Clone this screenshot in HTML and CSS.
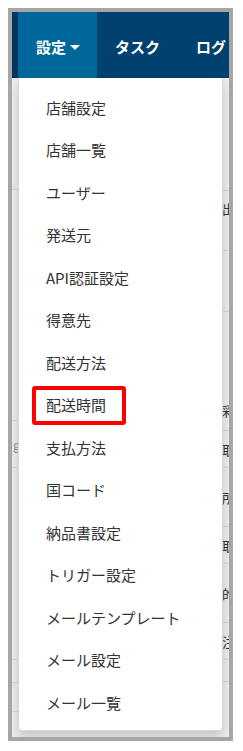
FILE: index.html
```html
<!DOCTYPE html>
<html lang="ja">
<head>
    <meta charset="UTF-8">
    <meta name="viewport" content="width=device-width, initial-scale=1.0">
    <title>設定メニュー</title>
    <link rel="stylesheet" href="styles.css">
</head>
<body>
    <div class="frame">
        <nav class="navbar">
            <div class="brand"></div>
            <ul class="nav">
                <li class="nav-item active">
                    <span class="nav-link">設定<span class="caret"></span></span>
                    <ul class="dropdown">
                        <li>店舗設定</li>
                        <li>店舗一覧</li>
                        <li>ユーザー</li>
                        <li>発送元</li>
                        <li>API認証設定</li>
                        <li>得意先</li>
                        <li>配送方法</li>
                        <li class="marked">配送時間<span class="mark"></span></li>
                        <li>支払方法</li>
                        <li>国コード</li>
                        <li>納品書設定</li>
                        <li>トリガー設定</li>
                        <li>メールテンプレート</li>
                        <li>メール設定</li>
                        <li>メール一覧</li>
                    </ul>
                </li>
                <li class="nav-item"><span class="nav-link">タスク</span></li>
                <li class="nav-item"><span class="nav-link">ログ<span class="caret"></span></span></li>
            </ul>
        </nav>

        <!-- page content hidden behind the open menu -->
        <div class="page">
            <div class="side">
                <div class="side-row r1"></div>
                <div class="side-row r2"></div>
                <div class="side-row r3">gmail</div>
                <div class="side-row r4"></div>
                <div class="side-row r5"></div>
                <div class="side-row r6"></div>
            </div>
            <div class="main">
                <div class="row h1"><span class="spacer"></span></div>
                <div class="row h2"><span class="spacer"></span><span class="cell">出荷</span></div>
                <div class="row h3"><span class="spacer"></span></div>
                <div class="row h4 end"><span class="spacer"></span><span class="cell">彩色</span></div>
                <div class="row h5"><span class="spacer"></span><span class="cell">取引</span></div>
                <div class="row h6"><span class="spacer"></span><span class="cell">所属</span></div>
                <div class="row h5"><span class="spacer"></span><span class="cell">取引</span></div>
                <div class="row h6"><span class="spacer"></span><span class="cell">的確</span></div>
                <div class="row h5"><span class="spacer"></span><span class="cell">注文</span></div>
                <div class="row h7"><span class="spacer"></span></div>
            </div>
        </div>
    </div>
</body>
</html>
```

FILE: styles.css
```css
body {
    margin: 8px;
    background-color: #fff;
    font-family: "Noto Sans CJK JP", "Noto Sans", sans-serif;
    color: #333;
}

.frame {
    width: 225px;
    height: 733px;
    box-sizing: border-box;
    border: 4px solid #a8a5a5;
    background-color: #eee;
    overflow: hidden;
    position: relative;
}

/* top navigation */
.navbar {
    display: flex;
    height: 66px;
    background-color: #00416f;
    white-space: nowrap;
}

.brand {
    width: 6px;
    flex: none;
    background-color: #00355f;
}

.nav {
    display: flex;
    margin: 0;
    padding: 0;
    list-style: none;
}

.nav-item {
    position: relative;
}

.nav-link {
    display: flex;
    align-items: center;
    height: 66px;
    padding: 3px 18px 0;
    box-sizing: border-box;
    font-size: 15px;
    font-weight: bold;
    color: #fff;
}

.nav-item.active .nav-link {
    background-color: #00679a;
    padding-right: 17px;
}

.caret {
    width: 0;
    height: 0;
    margin-left: 4px;
    margin-top: 1px;
    border-top: 5px solid #fff;
    border-left: 5px solid transparent;
    border-right: 5px solid transparent;
}

/* dropdown menu */
.dropdown {
    position: absolute;
    top: 100%;
    left: 0;
    z-index: 10;
    width: 205px;
    box-sizing: border-box;
    margin: 0;
    padding: 8px 0 6px;
    list-style: none;
    background-color: #fff;
    border: 1px solid rgba(0, 0, 0, .15);
    border-top: none;
    border-radius: 0 0 4px 4px;
    box-shadow: 0 6px 12px rgba(0, 0, 0, .175);
}

.dropdown li {
    position: relative;
    height: 42.5px;
    padding: 0 27px;
    display: flex;
    align-items: center;
    font-size: 15px;
    color: #333;
    white-space: nowrap;
}

.mark {
    position: absolute;
    top: 2.5px;
    left: 12.5px;
    width: 94px;
    height: 39px;
    box-sizing: border-box;
    border: 4px solid #f00;
    border-radius: 3px;
}

/* background page */
.page {
    display: flex;
    height: 659px;
}

.side {
    width: 60px;
    flex: none;
    display: flex;
    flex-direction: column;
}

.side-row {
    border-bottom: 1px solid #d8d8d8;
    padding-left: 1px;
    font-size: 13px;
    color: #999;
    white-space: nowrap;
    display: flex;
    align-items: center;
}

.side-row.r1 { height: 111px; }
.side-row.r2 { height: 230px; }
.side-row.r3 { height: 46px; }
.side-row.r4 { height: 191px; }
.side-row.r5 { height: 22px; }
.side-row.r6 { height: 28px; }

.main {
    flex: 1;
    display: flex;
    flex-direction: column;
}

.row {
    display: flex;
    align-items: center;
    border-bottom: 1px solid #d8d8d8;
    white-space: nowrap;
    box-sizing: border-box;
}

.row.end {
    align-items: flex-end;
    padding-bottom: 10px;
}

.row.h1 { height: 113px; }
.row.h2 { height: 60px; align-items: flex-start; padding-top: 8px; }
.row.h3 { height: 61px; }
.row.h4 { height: 119px; }
.row.h5 { height: 37px; }
.row.h6 { height: 59px; }
.row.h7 { height: 22px; }

.spacer {
    width: 150px;
    flex: none;
}

.cell {
    font-size: 13px;
    color: #333;
}
```
